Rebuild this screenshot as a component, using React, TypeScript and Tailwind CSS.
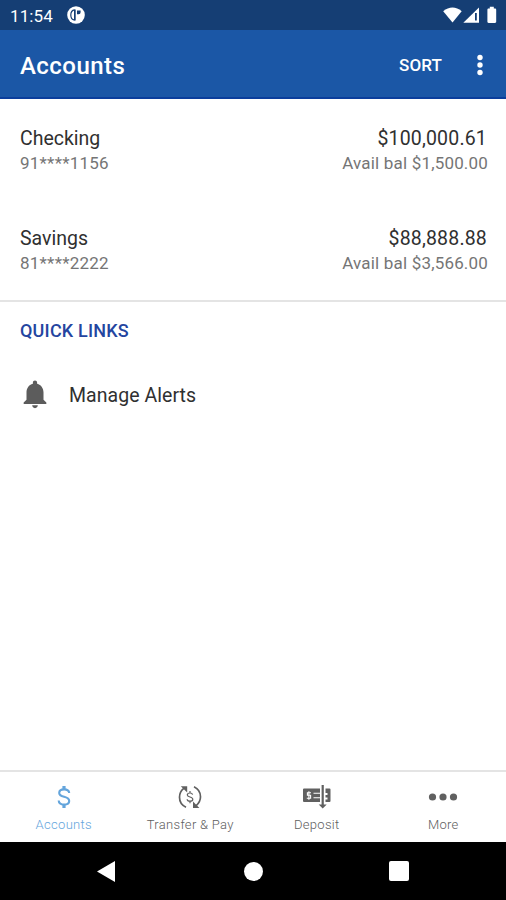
import React, { useState } from 'react';
import clsx from 'clsx';

interface Account {
  id: string;
  name: string;
  mask: string;
  balance: string;
  available: string;
}

interface Tab {
  id: string;
  label: string;
  icon: React.ReactNode;
}

const accounts: Account[] = [
  { id: 'checking', name: 'Checking', mask: '91****1156', balance: '$100,000.61', available: '$1,500.00' },
  { id: 'savings', name: 'Savings', mask: '81****2222', balance: '$88,888.88', available: '$3,566.00' },
];

const DollarIcon = () => (
  <svg width="14" height="24" viewBox="0 0 14 24" fill="none" stroke="currentColor" strokeWidth="2.1">
    <path d="M12.200 8C12 5.600 10 4.400 7.100 4.400 4.200 4.400 2.200 5.700 2.200 7.900 2.200 10.300 4.600 11.100 7.100 11.800 9.800 12.500 12.200 13.500 12.200 16 12.200 18.300 10.100 19.600 7.100 19.600 3.900 19.600 1.800 18.200 1.700 15.500" />
    <path d="M7 1v3.400M7 19.600V23" strokeWidth="3.200" />
  </svg>
);

const TransferIcon = () => (
  <svg width="24" height="24" viewBox="0 0 24 24" fill="none" stroke="currentColor" strokeWidth="1.7">
    <path d="M8 22.200C3.800 20.200 1.500 16.500 1.500 12.200 1.500 8.800 3.200 5.500 6 3.200" />
    <path d="M2.800 1.200h6.400v6.400z" fill="currentColor" stroke="none" />
    <path d="M16 1.800C20.200 3.800 22.500 7.500 22.500 11.800c0 3.400-1.700 6.700-4.500 9" />
    <path d="M21.400 22.900h-6.400v-6.400z" fill="currentColor" stroke="none" />
    <path d="M14.600 9.600C14.300 8.500 13.400 8 12 8c-1.600 0-2.700.7-2.700 1.900 0 1.300 1.300 1.700 2.700 2.100 1.500.4 2.800.9 2.800 2.200S13.600 16.200 12 16.200s-2.800-.8-2.900-2M12 6v2M12 16.200v2" strokeWidth="1.200" />
  </svg>
);

const DepositIcon = () => (
  <svg width="28" height="24" viewBox="0 0 28 24" fill="currentColor">
    <path d="M1 3.500h16v13.500H1a1 1 0 0 1-1-1V4.500a1 1 0 0 1 1-1z" />
    <path d="M22.500 3.500H26.500a1 1 0 0 1 1 1v11.500a1 1 0 0 1-1 1h-4v-2.500h2v-2h-2v-2.500h2v-2h-2z" />
    <path d="M8 7.800H4.400v2.500h3.200V13.300H3.800M5.900 6.300v8.400M10.500 8.200H17M10.500 12.800H17" fill="none" stroke="#fff" strokeWidth="1.100" />
    <path d="M18.600 0h2.200v19.500h2.900L19.700 23.500 15.700 19.500h2.900z" />
  </svg>
);

const MoreIcon = () => (
  <svg width="30" height="24" viewBox="0 0 30 24" fill="currentColor">
    <circle cx="4.500" cy="12" r="3.600" />
    <circle cx="15" cy="12" r="3.600" />
    <circle cx="25.500" cy="12" r="3.600" />
  </svg>
);

const BellIcon = () => (
  <svg width="34" height="34" viewBox="0 0 24 24" fill="#5c5c5c">
    <path d="M12 22c1.100 0 2-.9 2-2h-4c0 1.100.89 2 2 2zm6-6v-5c0-3.070-1.640-5.640-4.500-6.320V4c0-.83-.67-1.500-1.500-1.500s-1.500.67-1.500 1.500v.68C7.630 5.360 6 7.920 6 11v5l-2 2v1h16v-1l-2-2z" />
  </svg>
);

const tabs: Tab[] = [
  { id: 'accounts', label: 'Accounts', icon: <DollarIcon /> },
  { id: 'transfer', label: 'Transfer & Pay', icon: <TransferIcon /> },
  { id: 'deposit', label: 'Deposit', icon: <DepositIcon /> },
  { id: 'more', label: 'More', icon: <MoreIcon /> },
];

const StatusBar: React.FC = () => (
  <div className="flex h-[30px] items-center justify-between bg-[#153e74] pl-2.5 pr-2 text-white">
    <div className="flex items-center">
      <span className="w-[44px] pt-0.5 text-[17px] leading-none tracking-[0.1px] whitespace-nowrap">11:54</span>
      <svg className="ml-[13px]" width="18" height="18" viewBox="0 0 18 18">
        <circle cx="9" cy="9" r="8.800" fill="#fff" />
        <path d="M7.500 3.800C5 4.200 3.800 6 3.800 9s1.200 4.700 3.700 5.200" fill="none" stroke="#153e74" strokeWidth="1.200" />
        <path d="M7 3.500h1.700v11H7zM10 4.500h3.600v1.800a2 2 0 0 1-2 2H10z" fill="#153e74" />
      </svg>
    </div>
    <svg width="56" height="18" viewBox="0 0 56 18" fill="#fff">
      <path d="M1.200 5.200C4.100 2.800 7.400 1.500 10.500 1.500s6.300 1.300 9.200 3.700L10.500 16.500z" />
      <path d="M37 1.500V16.800H21.300z" />
      <path d="M33 7h1.800v7.500H33z" fill="#153e74" />
      <path d="M47.800 0.800h4v1.800h1.200c.7 0 1.200.5 1.200 1.200v12c0 .7-.5 1.200-1.200 1.200h-6.400c-.7 0-1.200-.5-1.200-1.200V3.800c0-.7.5-1.200 1.200-1.200h1.200z" />
    </svg>
  </div>
);

const Header: React.FC = () => (
  <header className="flex h-[69px] items-center justify-between border-b-2 border-[#0b3e9c] bg-[#1b57a6] pl-5 pr-5 text-white">
    <h1 className="pt-1 text-[24px] leading-8 font-medium tracking-[0.45px]">Accounts</h1>
    <div className="flex items-center pt-0.5">
      <button className="pt-0.5 text-[17px] font-medium tracking-[0.1px]">SORT</button>
      <button className="ml-8 flex" aria-label="Options">
        <svg width="12" height="24" viewBox="0 0 12 24" fill="#fff">
          <circle cx="6" cy="4.500" r="2.700" />
          <circle cx="6" cy="12" r="2.700" />
          <circle cx="6" cy="19.500" r="2.700" />
        </svg>
      </button>
    </div>
  </header>
);

const AccountRow: React.FC<{ account: Account }> = ({ account }) => (
  <div className="flex h-[100px] justify-between pt-[27px] pl-5 pr-[18px]">
    <div>
      <div className="text-[19.5px] leading-[26px] text-[#303030]">{account.name}</div>
      <div className="text-[17px] leading-[22px] tracking-[0.22px] text-[#757575]">{account.mask}</div>
    </div>
    <div className="text-right">
      <div className="pr-px text-[19.5px] leading-[26px] tracking-[0.18px] text-[#303030]">{account.balance}</div>
      <div className="text-[17px] leading-[22px] tracking-[0.18px] text-[#757575]">Avail bal {account.available}</div>
    </div>
  </div>
);

const App: React.FC = () => {
  const [activeTab, setActiveTab] = useState('accounts');

  return (
    <div className="flex h-[900px] w-[506px] flex-col overflow-hidden bg-white font-['Roboto',sans-serif]">
      <StatusBar />
      <Header />

      <main className="flex-1">
        <section className="h-[203px] border-b-2 border-[#e4e4e4]">
          {accounts.map((account) => (
            <AccountRow key={account.id} account={account} />
          ))}
        </section>

        <section className="pt-[17px] pl-5">
          <h2 className="text-[18px] leading-6 font-medium tracking-[0.2px] text-[#2445a0]">QUICK LINKS</h2>
          <button className="mt-[33px] -ml-0.5 flex h-[35px] items-center">
            <BellIcon />
            <span className="ml-[17px] pt-[5px] text-[19.5px] leading-6 tracking-[0.05px] text-[#303030]">Manage Alerts</span>
          </button>
        </section>
      </main>

      <nav className="grid h-[72px] grid-cols-4 border-t-2 border-[#e4e4e4]">
        {tabs.map((tab) => (
          <button
            key={tab.id}
            onClick={() => setActiveTab(tab.id)}
            className={clsx(
              'flex flex-col items-center pt-[13px] pl-px',
              activeTab === tab.id ? 'text-[#64a5dc]' : 'text-[#606060]'
            )}
          >
            {tab.icon}
            <span className="mt-1.5 text-[13px] leading-5 font-light tracking-[0.3px] whitespace-nowrap">{tab.label}</span>
          </button>
        ))}
      </nav>

      <div className="flex h-[58px] items-center justify-between bg-black pr-[97px] pl-[97px]">
        <svg width="18" height="21" viewBox="0 0 18 21" fill="#fff">
          <path d="M18 0v21L0 10.500z" />
        </svg>
        <div className="ml-0.5 size-[19px] rounded-full bg-white" />
        <div className="size-5 rounded-xs bg-white" />
      </div>
    </div>
  );
};

export default App;
